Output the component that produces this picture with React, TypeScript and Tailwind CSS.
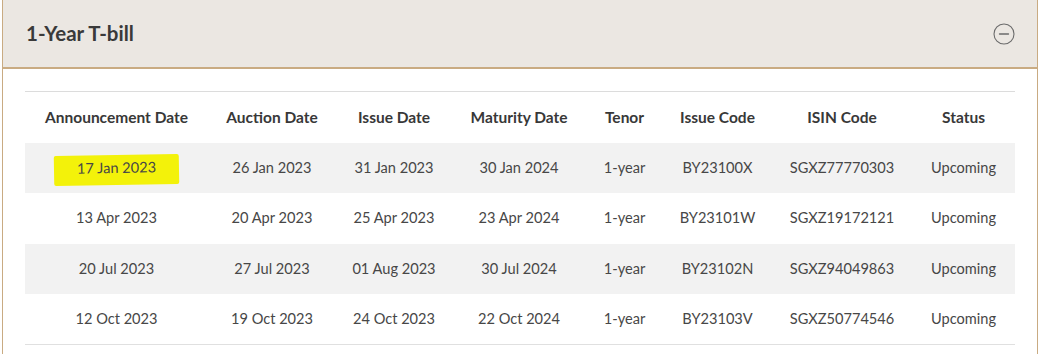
const columns = [
  { label: "Announcement Date", width: "w-[183px]" },
  { label: "Auction Date", width: "w-[128px]" },
  { label: "Issue Date", width: "w-[116px]" },
  { label: "Maturity Date", width: "w-[134px]" },
  { label: "Tenor", width: "w-[77px]" },
  { label: "Issue Code", width: "w-[109px]" },
  { label: "ISIN Code", width: "w-[140px]" },
  { label: "Status", width: "w-[103px]" },
];

const rows = [
  ["17 Jan 2023", "26 Jan 2023", "31 Jan 2023", "30 Jan 2024", "1-year", "BY23100X", "SGXZ77770303", "Upcoming"],
  ["13 Apr 2023", "20 Apr 2023", "25 Apr 2023", "23 Apr 2024", "1-year", "BY23101W", "SGXZ19172121", "Upcoming"],
  ["20 Jul 2023", "27 Jul 2023", "01 Aug 2023", "30 Jul 2024", "1-year", "BY23102N", "SGXZ94049863", "Upcoming"],
  ["12 Oct 2023", "19 Oct 2023", "24 Oct 2023", "22 Oct 2024", "1-year", "BY23103V", "SGXZ50774546", "Upcoming"],
];

export default function App() {
  return (
    <div
      className="w-[1053px] h-[354px] bg-white overflow-hidden"
      style={{ fontFamily: "Lato, 'Noto Sans', sans-serif" }}
    >
      <div className="ml-[2px] w-[1036px]">
        {/* Accordion header */}
        <div className="h-[69px] bg-[#ebe7e2] border-x border-b-2 border-[#c9ab82] flex items-center justify-between pl-[23px] pr-[22px]">
          <h3 className="text-[20.5px] font-bold text-[#3a3a3a] pb-[1px]">1-Year T-bill</h3>
          <svg width="22" height="22" viewBox="0 0 22 22" fill="none">
            <circle cx="11" cy="11" r="10" stroke="#6b6b6b" strokeWidth="1.1" />
            <line x1="6.5" y1="11" x2="15.5" y2="11" stroke="#6b6b6b" strokeWidth="1.3" strokeLinecap="round" />
          </svg>
        </div>

        {/* Accordion body */}
        <div className="border-x border-[#c9ab82] bg-white pt-[22px] px-[22px] h-[300px]">
          <table className="w-[990px] table-fixed border-collapse">
            <thead>
              <tr className="border-t border-[#dcdcdc]">
                {columns.map((c) => (
                  <th
                    key={c.label}
                    className={`${c.width} h-[51px] text-center text-[15.5px] font-bold text-[#383838] px-0`}
                  >
                    {c.label}
                  </th>
                ))}
              </tr>
            </thead>
            <tbody>
              {rows.map((r, i) => (
                <tr
                  key={i}
                  className={`${i % 2 === 0 ? "bg-[#f2f2f2]" : "bg-white"} ${i === rows.length - 1 ? "border-b border-[#e0e0e0]" : ""}`}
                >
                  {r.map((cell, j) => (
                    <td key={j} className="h-[50.5px] text-center text-[14.6px] text-[#474747] px-0">
                      {i === 0 && j === 0 ? (
                        <span className="bg-[#f3f20a] px-[23px] py-[4px] -rotate-1 translate-y-[2px] inline-block rounded-[2px]">
                          <span className="inline-block -translate-y-[2px]">{cell}</span>
                        </span>
                      ) : (
                        cell
                      )}
                    </td>
                  ))}
                </tr>
              ))}
            </tbody>
          </table>
        </div>
      </div>
    </div>
  );
}
